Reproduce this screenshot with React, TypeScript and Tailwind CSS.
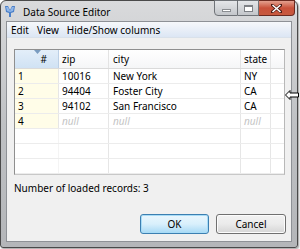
import React from "react";

const font = { fontFamily: '"Noto Sans", "Open Sans", sans-serif' };

type Row = { n: string; zip: string; city: string; state: string; nul?: boolean };
const rows: Row[] = [
  { n: "1", zip: "10016", city: "New York", state: "NY" },
  { n: "2", zip: "94404", city: "Foster City", state: "CA" },
  { n: "3", zip: "94102", city: "San Francisco", state: "CA" },
  { n: "4", zip: "null", city: "null", state: "null", nul: true },
];

function Cell({ w, children, cls = "" }: { w: string; children?: React.ReactNode; cls?: string }) {
  return (
    <div className={`${w} h-full shrink-0 border-r border-[#e6e6e6] flex items-center pl-[3px] leading-[14px] ${cls}`}>
      {children}
    </div>
  );
}

export default function App() {
  return (
    <div className="w-[300px] h-[249px] bg-white relative overflow-hidden text-[10px] text-black" style={font}>
      <div className="w-[298px] h-[248px] rounded-t-[6px] rounded-b-[3px] border border-[#4a4a4a] bg-gradient-to-b from-[#d9dadc] via-[#bfc1c4] to-[#b4b6b9] flex flex-col shadow-[1px_1px_2px_rgba(0,0,0,0.4)]">
        {/* title bar */}
        <div className="h-[20px] shrink-0 flex items-start relative">
          <div className="mt-[3px] ml-[2px] w-[14px] h-[14px] shrink-0">
            <svg width="14" height="14" viewBox="0 0 14 14">
              <path d="M2 2 L5 2 L7 6 L9 2 L12 2 L11 8 L8 9 L8 13 L6 13 L6 9 L3 8 Z" fill="#4a7fc8" />
              <path d="M3 3 L5 3 L7 7 L9 3 L11 3 L10 7 L7 8 L4 7 Z" fill="#8fb6ea" />
            </svg>
          </div>
          <span className="ml-[6px] mt-[4px] text-[10px] leading-[14px] text-black">Data Source Editor</span>
          <div className="ml-auto mr-[2px] flex h-[16px] shrink-0 -mt-px">
            <div className="w-[24px] h-[16px] shrink-0 rounded-bl-[4px] border border-[#6f7378] bg-gradient-to-b from-[#e4e6e9] to-[#c3c6ca] flex items-center justify-center">
              <div className="w-[9px] h-[3px] bg-white border border-[#8a8d91] mt-[4px]" />
            </div>
            <div className="w-[21px] h-[16px] shrink-0 border-y border-r border-[#6f7378] bg-gradient-to-b from-[#e4e6e9] to-[#c3c6ca] flex items-center justify-center">
              <div className="w-[9px] h-[7px] border border-[#7d8085] border-t-2 bg-white" />
            </div>
            <div className="w-[36px] h-[16px] shrink-0 rounded-br-[4px] border-y border-r border-[#6b2a20] bg-gradient-to-b from-[#e3a08f] via-[#c9513a] to-[#c75a3f] flex items-center justify-center">
              <svg width="11" height="9" viewBox="0 0 11 9">
                <path d="M1 1 L10 8 M10 1 L1 8" stroke="#4c1b14" strokeWidth="3" strokeLinecap="square" />
                <path d="M1.5 1 L9.5 8 M9.5 1 L1.5 8" stroke="#ffffff" strokeWidth="1.6" />
              </svg>
            </div>
          </div>
        </div>
        {/* client */}
        <div className="flex-1 mx-[5px] mb-[5px] border border-[#8e9196] bg-[#f0f0f0] flex flex-col">
          <div className="h-[16px] shrink-0 bg-gradient-to-b from-[#f6f8fb] to-[#dce6f4] border-b border-[#d9e1ea] flex items-center gap-[8px] pl-[4px] leading-none">
            <span>Edit</span>
            <span>View</span>
            <span>Hide/Show columns</span>
          </div>
          {/* table */}
          <div className="mt-[11px] ml-[7px] w-[271px] h-[126px] shrink-0 border border-[#8f8f8f] border-r-[#b8b8b8] border-b-[#c8c8c8] bg-white flex flex-col overflow-hidden">
            <div className="h-[19px] flex border-b border-[#dadada] shrink-0 leading-[14px]">
              <div className="w-[44px] h-full shrink-0 border-r border-[#bcd0e6] bg-gradient-to-b from-[#e3eef9] to-[#d0e2f4] relative flex items-center justify-end pr-[11px]">
                <svg className="absolute left-[19px] top-0" width="7" height="4" viewBox="0 0 7 4">
                  <path d="M0 0 L7 0 L3.5 4 Z" fill="#7a9cc0" />
                </svg>
                #
              </div>
              <div className="w-[50px] h-full shrink-0 border-r border-[#e3e3e3] bg-gradient-to-b from-white to-[#f5f6f7] flex items-center pl-[3px]">zip</div>
              <div className="w-[132px] h-full shrink-0 border-r border-[#e3e3e3] bg-gradient-to-b from-white to-[#f5f6f7] flex items-center pl-[4px]">city</div>
              <div className="w-[30px] h-full shrink-0 border-r border-[#e3e3e3] bg-gradient-to-b from-white to-[#f5f6f7] flex items-center pl-[3px]">state</div>
              <div className="flex-1 h-full bg-gradient-to-b from-white to-[#f5f6f7]" />
            </div>
            {rows.map((r) => (
              <div key={r.n} className="h-[15px] flex border-b border-[#ececec] shrink-0">
                <div className="w-[44px] h-full shrink-0 bg-[#fffde8] border-r border-[#e6e6e6] flex items-center pl-[3px] leading-[14px]">{r.n}</div>
                <Cell w="w-[50px]" cls={r.nul ? "italic text-[#c4c4c4]" : ""}>{r.zip}</Cell>
                <Cell w="w-[132px]" cls={r.nul ? "italic text-[#c4c4c4] pl-[4px]" : "pl-[4px]"}>{r.city}</Cell>
                <Cell w="w-[30px]" cls={r.nul ? "italic text-[#c4c4c4]" : ""}>{r.state}</Cell>
                <div className="flex-1" />
              </div>
            ))}
            {[0, 1, 2].map((i) => (
              <div key={i} className="h-[15px] flex border-b border-[#ececec] shrink-0">
                <div className="w-[44px] h-full shrink-0 border-r border-[#f4f4f4]" />
                <Cell w="w-[50px]" />
                <Cell w="w-[132px]" />
                <Cell w="w-[30px]" />
                <div className="flex-1" />
              </div>
            ))}
          </div>
          <div className="mt-[6px] ml-[7px] leading-[14px]">Number of loaded records: 3</div>
          <div className="mt-[19px] flex justify-end gap-[7px] pr-[5px]">
            <button className="w-[69px] h-[20px] rounded-[3px] border border-[#3c7fb1] bg-gradient-to-b from-[#eaf6fd] via-[#d9f0fc] to-[#a7d9f5] shadow-[inset_0_0_0_1px_#a8dcf7] leading-none">OK</button>
            <button className="w-[70px] h-[20px] rounded-[3px] border border-[#707070] bg-gradient-to-b from-[#f2f2f2] via-[#ebebeb] to-[#d5d5d5] shadow-[inset_0_0_0_1px_#fcfcfc] leading-none">Cancel</button>
          </div>
        </div>
      </div>
      {/* resize cursor */}
      <svg className="absolute left-[285px] top-[89px]" width="14" height="12" viewBox="0 0 14 12">
        <path d="M0.5 6 L5 1.5 L5 4 L13.5 4 L13.5 8 L5 8 L5 10.5 Z" fill="white" stroke="black" strokeWidth="1" />
      </svg>
    </div>
  );
}
